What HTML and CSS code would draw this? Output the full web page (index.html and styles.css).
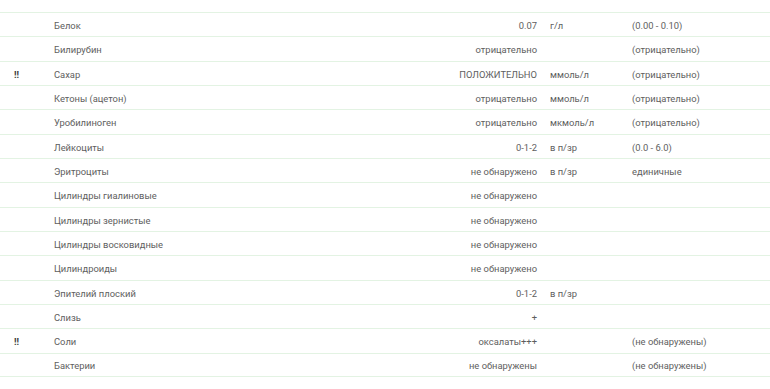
FILE: index.html
```html
<!DOCTYPE html>
<html lang="ru">
<head>
<meta charset="utf-8">
<title>Анализ мочи</title>
<link rel="stylesheet" href="styles.css">
</head>
<body>
<div class="results">
  <div class="row"><span class="flag"></span><span class="name">Белок</span><span class="value">0.07</span><span class="unit">г/л</span><span class="norm">(0.00 - 0.10)</span></div>
  <div class="row"><span class="flag"></span><span class="name">Билирубин</span><span class="value">отрицательно</span><span class="unit"></span><span class="norm">(отрицательно)</span></div>
  <div class="row"><span class="flag">!!</span><span class="name">Сахар</span><span class="value">ПОЛОЖИТЕЛЬНО</span><span class="unit">ммоль/л</span><span class="norm">(отрицательно)</span></div>
  <div class="row"><span class="flag"></span><span class="name">Кетоны (ацетон)</span><span class="value">отрицательно</span><span class="unit">ммоль/л</span><span class="norm">(отрицательно)</span></div>
  <div class="row"><span class="flag"></span><span class="name">Уробилиноген</span><span class="value">отрицательно</span><span class="unit">мкмоль/л</span><span class="norm">(отрицательно)</span></div>
  <div class="row"><span class="flag"></span><span class="name">Лейкоциты</span><span class="value">0-1-2</span><span class="unit">в п/зр</span><span class="norm">(0.0 - 6.0)</span></div>
  <div class="row"><span class="flag"></span><span class="name">Эритроциты</span><span class="value">не обнаружено</span><span class="unit">в п/зр</span><span class="norm">единичные</span></div>
  <div class="row"><span class="flag"></span><span class="name">Цилиндры гиалиновые</span><span class="value">не обнаружено</span><span class="unit"></span><span class="norm"></span></div>
  <div class="row"><span class="flag"></span><span class="name">Цилиндры зернистые</span><span class="value">не обнаружено</span><span class="unit"></span><span class="norm"></span></div>
  <div class="row"><span class="flag"></span><span class="name">Цилиндры восковидные</span><span class="value">не обнаружено</span><span class="unit"></span><span class="norm"></span></div>
  <div class="row"><span class="flag"></span><span class="name">Цилиндроиды</span><span class="value">не обнаружено</span><span class="unit"></span><span class="norm"></span></div>
  <div class="row"><span class="flag"></span><span class="name">Эпителий плоский</span><span class="value">0-1-2</span><span class="unit">в п/зр</span><span class="norm"></span></div>
  <div class="row"><span class="flag"></span><span class="name">Слизь</span><span class="value">+</span><span class="unit"></span><span class="norm"></span></div>
  <div class="row"><span class="flag">!!</span><span class="name">Соли</span><span class="value">оксалаты+++</span><span class="unit"></span><span class="norm">(не обнаружены)</span></div>
  <div class="row"><span class="flag"></span><span class="name">Бактерии</span><span class="value">не обнаружены</span><span class="unit"></span><span class="norm">(не обнаружены)</span></div>
</div>
</body>
</html>
```
FILE: styles.css
```css
html, body {
  margin: 0;
  padding: 0;
  background: #ffffff;
}

body {
  font-family: Roboto, "Noto Sans", sans-serif;
  font-size: 9.4px;
  color: #5e5e5e;
}

.results {
  padding-top: 12px;
}

.row {
  display: grid;
  grid-template-columns: 54px 306px 190px 82px 1fr;
  align-items: center;
  height: 24.33px;
  padding-top: 2px;
  box-sizing: border-box;
  border-top: 1.5px solid #e3f3e3;
}

.row:last-child {
  border-bottom: 1.5px solid #e3f3e3;
}

.flag {
  padding-left: 14px;
  font-weight: 700;
  color: #3a3a3a;
}

.value {
  text-align: right;
  padding-right: 13px;
}
```
